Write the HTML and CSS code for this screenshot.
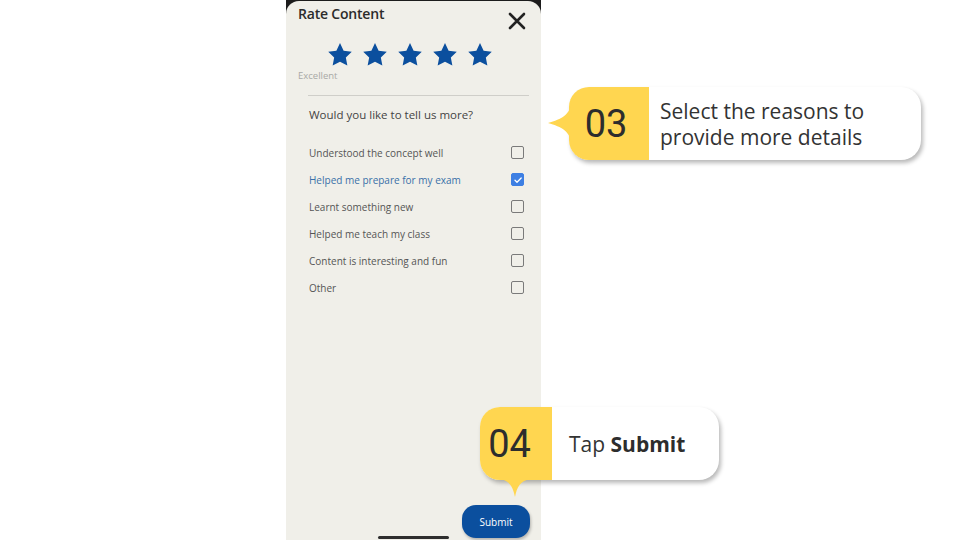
FILE: index.html
```html
<!DOCTYPE html>
<html>
<head>
<meta charset="utf-8">
<link rel="stylesheet" href="styles.css">
</head>
<body>
<div class="stage">
  <div class="phone">
    <div class="screen">
      <div class="header">
        <div class="title">Rate Content</div>
        <svg class="close" viewBox="0 0 20 20" width="20" height="20"><path d="M3 3L17 17M17 3L3 17" stroke="#222" stroke-width="2.6" stroke-linecap="round"/></svg>
      </div>
      <div class="stars">
        <svg viewBox="0 0 24 24" class="star"><path d="M12 1.8l3.1 6.5 7 .9-5.1 4.9 1.3 7L12 17.7l-6.3 3.4 1.3-7L1.9 9.2l7-.9z"/></svg>
        <svg viewBox="0 0 24 24" class="star"><path d="M12 1.8l3.1 6.5 7 .9-5.1 4.9 1.3 7L12 17.7l-6.3 3.4 1.3-7L1.9 9.2l7-.9z"/></svg>
        <svg viewBox="0 0 24 24" class="star"><path d="M12 1.8l3.1 6.5 7 .9-5.1 4.9 1.3 7L12 17.7l-6.3 3.4 1.3-7L1.9 9.2l7-.9z"/></svg>
        <svg viewBox="0 0 24 24" class="star"><path d="M12 1.8l3.1 6.5 7 .9-5.1 4.9 1.3 7L12 17.7l-6.3 3.4 1.3-7L1.9 9.2l7-.9z"/></svg>
        <svg viewBox="0 0 24 24" class="star"><path d="M12 1.8l3.1 6.5 7 .9-5.1 4.9 1.3 7L12 17.7l-6.3 3.4 1.3-7L1.9 9.2l7-.9z"/></svg>
      </div>
      <div class="rating-label">Excellent</div>
      <div class="divider"></div>
      <div class="question">Would you like to tell us more?</div>
      <ul class="reasons">
        <li class="reason"><span>Understood the concept well</span><span class="box"></span></li>
        <li class="reason selected"><span>Helped me prepare for my exam</span><span class="box checked"><svg viewBox="0 0 12 12" width="12" height="12"><path d="M3 6.3l2 2L9.2 4" fill="none" stroke="#fff" stroke-width="1.3" stroke-linecap="round" stroke-linejoin="round"/></svg></span></li>
        <li class="reason"><span>Learnt something new</span><span class="box"></span></li>
        <li class="reason"><span>Helped me teach my class</span><span class="box"></span></li>
        <li class="reason"><span>Content is interesting and fun</span><span class="box"></span></li>
        <li class="reason"><span>Other</span><span class="box"></span></li>
      </ul>
      <div class="footer">
        <button class="submit">Submit</button>
      </div>
      <div class="home-bar"></div>
    </div>
  </div>

  <div class="callout callout-03">
    <svg class="tail tail-left" viewBox="0 0 24 44" width="24" height="44"><path d="M24 0 C22 14 14 18 0 22 C14 26 22 30 24 44 Z" fill="#ffd650"/></svg>
    <div class="num">03</div>
    <div class="text"><div>Select the reasons to</div><div>provide more details</div></div>
  </div>

  <div class="callout callout-04">
    <svg class="tail tail-down" viewBox="0 0 30 20" width="30" height="20"><path d="M0 0 C10 2 13 8 15 18 C17 8 20 2 30 0 Z" fill="#ffd650"/></svg>
    <div class="num">04</div>
    <div class="text"><div>Tap <b>Submit</b></div></div>
  </div>
</div>
</body>
</html>
```
FILE: styles.css
```css
* { box-sizing: border-box; }
html, body { margin: 0; padding: 0; background: #fff; }
body { width: 960px; height: 540px; overflow: hidden; font-family: "Open Sans", "Noto Sans", sans-serif; }

.stage { position: relative; width: 960px; height: 540px; }

.phone {
  margin-left: 286px;
  width: 255px;
  height: 540px;
  background: #1c1c1c;
  padding-top: 1px;
}
.screen {
  height: 100%;
  background: #f0efe9;
  border-radius: 13px 13px 0 0;
  display: flex;
  flex-direction: column;
  position: relative;
}

.header {
  display: flex;
  justify-content: space-between;
  align-items: flex-start;
  padding: 3px 14px 0 12px;
  height: 40px;
  flex: none;
}
.title { font-size: 14px; font-weight: 600; color: #2b2b2b; line-height: 20px; letter-spacing: -0.2px; }
.close { margin-top: 7px; }

.stars {
  display: flex;
  justify-content: center;
  gap: 7px;
  padding-right: 8px;
}
.star { width: 28px; height: 28px; fill: #0b4f9e; }

.rating-label { font-size: 9.5px; color: #a9a9a6; padding-left: 12px; margin-top: 0; line-height: 14px; }

.divider { height: 1px; background: #cfcec9; margin: 12px 12px 0 22px; }

.question { font-size: 11.5px; color: #444; padding-left: 23px; margin-top: 11px; line-height: 16px; }

.reasons { list-style: none; margin: 16px 0 0; padding: 0 17px 0 23px; }
.reason {
  display: flex;
  justify-content: space-between;
  align-items: center;
  height: 27px;
  font-size: 10px;
  color: #555;
}
.reason.selected { color: #3a6fa8; }
.box {
  width: 13px; height: 13px;
  border: 1.5px solid #7a7a7a;
  border-radius: 2px;
  display: flex; align-items: center; justify-content: center;
}
.box.checked { background: #3d7fe3; border-color: #3d7fe3; }
.box.checked svg { flex: none; }

.footer { margin-top: auto; display: flex; justify-content: flex-end; padding: 0 11px 2px 0; }
.submit {
  width: 68px; height: 33px;
  border: none;
  border-radius: 14px;
  background: #0b4f9e;
  color: #fff;
  font-family: "Open Sans", "Noto Sans", sans-serif;
  font-size: 10px;
  box-shadow: 1px 2px 3px rgba(0,0,0,0.25);
}
.home-bar {
  position: absolute;
  left: 92px; bottom: 1px;
  width: 71px; height: 3px;
  border-radius: 2px;
  background: #2e2e2e;
}

.callout {
  position: absolute;
  display: flex;
  height: 73px;
  border-radius: 20px;
  background: #fff;
  box-shadow: 2px 3px 4px rgba(0,0,0,0.28);
}
.callout .num {
  background: #ffd650;
  border-radius: 20px 0 0 20px;
  display: flex; align-items: center; justify-content: center;
  font-family: Roboto, sans-serif;
  font-weight: 400;
  font-size: 38px;
  color: #2d2d2d;
}
.callout .text {
  display: flex; flex-direction: column; justify-content: center;
  font-size: 21px;
  line-height: 27px;
  color: #333;
  padding-left: 11px;
}
.callout .text > div { height: 26px; white-space: nowrap; }
.callout .text b { font-weight: 700; color: #2d2d2d; }
.callout-03 { left: 569px; top: 87px; width: 352px; }
.callout-03 .num { width: 80px; padding-right: 6px; }
.callout-04 { left: 480px; top: 407px; width: 239px; }
.callout-04 .num { width: 72px; padding-right: 13px; }
.callout-04 .text { padding-left: 17px; }

.tail { position: absolute; }
.tail-left { left: -21px; top: 14px; }
.tail-down { left: 20px; top: 72px; }
```
